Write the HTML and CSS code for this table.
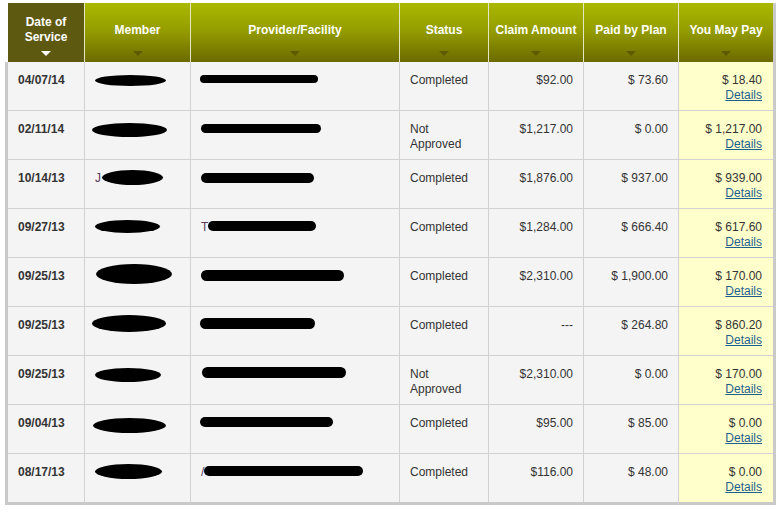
FILE: index.html
```html
<!DOCTYPE html>
<html>
<head>
<meta charset="utf-8">
<link rel="stylesheet" href="styles.css">
</head>
<body>
<div class="claims">
  <div class="head">
    <div class="th sel"><div class="lbl">Date of<br>Service</div><div class="arr"></div></div>
    <div class="th"><div class="lbl">Member</div><div class="arr"></div></div>
    <div class="th"><div class="lbl">Provider/Facility</div><div class="arr"></div></div>
    <div class="th"><div class="lbl">Status</div><div class="arr"></div></div>
    <div class="th"><div class="lbl">Claim Amount</div><div class="arr"></div></div>
    <div class="th"><div class="lbl">Paid by Plan</div><div class="arr"></div></div>
    <div class="th last"><div class="lbl">You May Pay</div><div class="arr"></div></div>
  </div>
  <div class="rows">
    <div class="td date">04/07/14</div>
    <div class="td red"><span class="blob oval" style="margin:13px 0 0 10px;width:71px;height:11px"></span></div>
    <div class="td red"><span class="blob bar" style="margin:13px 0 0 9px;width:118px;height:8px"></span></div>
    <div class="td">Completed</div>
    <div class="td num">$92.00</div>
    <div class="td num">$ 73.60</div>
    <div class="td pay">$ 18.40<br><a href="#">Details</a></div>

    <div class="td date">02/11/14</div>
    <div class="td red"><span class="blob oval" style="margin:12px 0 0 7px;width:75px;height:14px"></span></div>
    <div class="td red"><span class="blob bar" style="margin:13px 0 0 10px;width:120px;height:9px"></span></div>
    <div class="td">Not<br>Approved</div>
    <div class="td num">$1,217.00</div>
    <div class="td num">$ 0.00</div>
    <div class="td pay">$ 1,217.00<br><a href="#">Details</a></div>

    <div class="td date">10/14/13</div>
    <div class="td red"><span class="pre">J</span><span class="blob oval" style="margin:10px 0 0 1px;width:61px;height:15px"></span></div>
    <div class="td red"><span class="blob bar" style="margin:13px 0 0 10px;width:113px;height:10px"></span></div>
    <div class="td">Completed</div>
    <div class="td num">$1,876.00</div>
    <div class="td num">$ 937.00</div>
    <div class="td pay">$ 939.00<br><a href="#">Details</a></div>

    <div class="td date">09/27/13</div>
    <div class="td red"><span class="blob oval" style="margin:11px 0 0 10px;width:65px;height:13px"></span></div>
    <div class="td red"><span class="pre">T</span><span class="blob bar" style="margin:12px 0 0 0;width:108px;height:10px"></span></div>
    <div class="td">Completed</div>
    <div class="td num">$1,284.00</div>
    <div class="td num">$ 666.40</div>
    <div class="td pay">$ 617.60<br><a href="#">Details</a></div>

    <div class="td date">09/25/13</div>
    <div class="td red"><span class="blob oval" style="margin:6px 0 0 11px;width:76px;height:20px"></span></div>
    <div class="td red"><span class="blob bar" style="margin:12px 0 0 10px;width:143px;height:11px"></span></div>
    <div class="td">Completed</div>
    <div class="td num">$2,310.00</div>
    <div class="td num">$ 1,900.00</div>
    <div class="td pay">$ 170.00<br><a href="#">Details</a></div>

    <div class="td date">09/25/13</div>
    <div class="td red"><span class="blob oval" style="margin:8px 0 0 7px;width:74px;height:17px"></span></div>
    <div class="td red"><span class="blob bar" style="margin:11px 0 0 9px;width:115px;height:11px"></span></div>
    <div class="td">Completed</div>
    <div class="td num">---</div>
    <div class="td num">$ 264.80</div>
    <div class="td pay">$ 860.20<br><a href="#">Details</a></div>

    <div class="td date">09/25/13</div>
    <div class="td red"><span class="blob oval" style="margin:12px 0 0 10px;width:66px;height:14px"></span></div>
    <div class="td red"><span class="blob bar" style="margin:11px 0 0 11px;width:144px;height:11px"></span></div>
    <div class="td">Not<br>Approved</div>
    <div class="td num">$2,310.00</div>
    <div class="td num">$ 0.00</div>
    <div class="td pay">$ 170.00<br><a href="#">Details</a></div>

    <div class="td date">09/04/13</div>
    <div class="td red"><span class="blob oval" style="margin:13px 0 0 8px;width:73px;height:15px"></span></div>
    <div class="td red"><span class="blob bar" style="margin:12px 0 0 9px;width:133px;height:10px"></span></div>
    <div class="td">Completed</div>
    <div class="td num">$95.00</div>
    <div class="td num">$ 85.00</div>
    <div class="td pay">$ 0.00<br><a href="#">Details</a></div>

    <div class="td date lastrow">08/17/13</div>
    <div class="td red lastrow"><span class="blob oval" style="margin:10px 0 0 10px;width:67px;height:15px"></span></div>
    <div class="td red lastrow"><span class="pre">/</span><span class="blob bar" style="margin:12px 0 0 0;width:159px;height:10px"></span></div>
    <div class="td lastrow">Completed</div>
    <div class="td num lastrow">$116.00</div>
    <div class="td num lastrow">$ 48.00</div>
    <div class="td pay lastrow">$ 0.00<br><a href="#">Details</a></div>
  </div>
</div>
</body>
</html>
```

FILE: styles.css
```css
html, body {
  margin: 0;
  padding: 0;
  background: #ffffff;
}

body {
  font-family: "Liberation Sans", Arial, sans-serif;
  font-size: 12px;
  color: #333333;
}

.claims {
  margin: 3px 0 0 5px;
  width: 768px;
  border-right: 3px solid #c9c9c9;
}

.head {
  display: grid;
  grid-template-columns: 77px 106px 209px 89px 95px 95px 94px;
  margin-left: 3px;
  height: 59px;
}

.th {
  box-sizing: border-box;
  height: 59px;
  background: linear-gradient(#abb800 0%, #959e00 45%, #6c6a00 100%);
  border-right: 1px solid #e4e6c4;
  color: #ffffff;
  font-weight: bold;
  font-size: 12px;
  line-height: 15px;
  text-align: center;
  display: flex;
  flex-direction: column;
  align-items: center;
}

.th.last {
  border-right: none;
}

.th.sel {
  background: #5e5911;
}

.lbl {
  height: 40px;
  margin-top: 7px;
  display: flex;
  align-items: center;
  justify-content: center;
}

.arr {
  margin-top: 1px;
  width: 0;
  height: 0;
  border-left: 5px solid transparent;
  border-right: 5px solid transparent;
  border-top: 5px solid #5d5b02;
}

.th.sel .arr {
  border-top-color: #ffffff;
}

.rows {
  display: grid;
  grid-template-columns: 77px 106px 209px 89px 95px 95px 94px;
  border-left: 3px solid #c9c9c9;
  border-bottom: 3px solid #c9c9c9;
  background: #f4f4f4;
}

.td {
  box-sizing: border-box;
  height: 49px;
  padding: 11px 10px 0 10px;
  border-right: 1px solid #d2d2d2;
  border-bottom: 1px solid #d2d2d2;
  line-height: 14.5px;
  white-space: nowrap;
}

.td.lastrow {
  border-bottom: none;
  height: 48px;
}

.td.date {
  font-weight: bold;
}

.td.num {
  text-align: right;
}

.td.pay {
  text-align: right;
  background: #ffffcc;
  border-right: none;
  padding-right: 11px;
}

.td.pay a {
  color: #1f5f8c;
  text-decoration: underline;
}

.td.red {
  padding: 0;
  display: flex;
  align-items: flex-start;
}

.pre {
  margin: 11px 0 0 10px;
  line-height: 14.5px;
  color: #5a3a5a;
}

.blob {
  display: block;
  background: #000000;
  flex: none;
}

.blob.oval {
  border-radius: 50%;
}

.blob.bar {
  border-radius: 6px;
}
```
